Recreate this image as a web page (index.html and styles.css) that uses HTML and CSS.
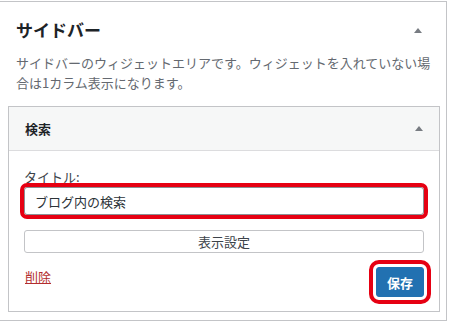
FILE: index.html
```html
<!DOCTYPE html>
<html lang="ja">
<head>
    <meta charset="UTF-8">
    <title>サイドバー</title>
    <link rel="stylesheet" href="styles.css">
</head>
<body>
    <div class="sidebar">
        <div class="sidebar-head">
            <h2 class="sidebar-title">サイドバー</h2>
            <span class="toggle"></span>
        </div>
        <p class="sidebar-desc">サイドバーのウィジェットエリアです。ウィジェットを入れていない場合は1カラム表示になります。</p>
        <div class="widget">
            <div class="widget-head">
                <h3 class="widget-title">検索</h3>
                <span class="toggle"></span>
            </div>
            <div class="widget-body">
                <label class="field-label" for="widget-title">タイトル:</label>
                <input id="widget-title" class="field-input" type="text" value="ブログ内の検索">
                <button class="btn-display">表示設定</button>
                <div class="widget-actions">
                    <a class="link-delete" href="#">削除</a>
                    <button class="btn-save">保存</button>
                </div>
            </div>
        </div>
    </div>
</body>
</html>
```

FILE: styles.css
```css
body {
    margin: 0;
    font-family: "Noto Sans CJK JP", "Noto Sans", sans-serif;
    background: #fff;
    color: #1d2327;
}
.sidebar {
    width: 432px;
    margin-top: 1px;
    padding: 0 6px 8px 8px;
    border: 1px solid #c3c4c7;
    border-left: none;
}
.sidebar-head {
    display: flex;
    align-items: center;
    justify-content: space-between;
    padding: 16px 18px 11px 8px;
}
.sidebar-title {
    margin: 0;
    font-size: 17px;
    line-height: 24px;
    font-weight: bold;
}
.toggle {
    width: 0;
    height: 0;
    border-left: 4px solid transparent;
    border-right: 4px solid transparent;
    border-bottom: 5px solid #787c82;
}
.sidebar-desc {
    margin: 0 0 13px 0;
    padding: 0 8px;
    font-size: 13px;
    line-height: 20px;
    color: #646970;
}
.widget {
    border: 1px solid #c3c4c7;
}
.widget-head {
    display: flex;
    align-items: center;
    justify-content: space-between;
    height: 43px;
    padding: 0 16px;
    background: #f6f7f7;
    border-bottom: 1px solid #dcdcde;
}
.widget-title {
    margin: 0;
    font-size: 13px;
    font-weight: bold;
}
.widget-body {
    padding: 16px 15px 14px 15px;
}
.field-label {
    display: block;
    font-size: 13px;
    line-height: 20px;
    color: #3c434a;
}
.field-input {
    display: block;
    box-sizing: border-box;
    width: 100%;
    height: 28px;
    margin: 0;
    padding: 0 10px;
    font-family: inherit;
    font-size: 13px;
    color: #2c3338;
    border: 1px solid #8c8f94;
    border-radius: 3px;
    outline: 4px solid #e60012;
}
.btn-display {
    display: block;
    box-sizing: border-box;
    width: 100%;
    height: 23px;
    margin-top: 15px;
    padding: 0;
    font-family: inherit;
    font-size: 13px;
    color: #3c434a;
    background: #fff;
    border: 1px solid #c3c4c7;
    border-radius: 3px;
}
.widget-actions {
    display: flex;
    justify-content: space-between;
    align-items: flex-start;
    margin-top: 14px;
}
.link-delete {
    font-size: 13px;
    line-height: 20px;
    color: #b32d2e;
    text-decoration: underline;
    margin-left: 1px;
}
.btn-save {
    width: 48px;
    height: 30px;
    padding: 0;
    font-family: inherit;
    font-size: 13px;
    font-weight: bold;
    color: #fff;
    background: #2271b1;
    border: 1px solid #2271b1;
    border-radius: 3px;
    outline: 4px solid #e60012;
    outline-offset: 3px;
}
```
